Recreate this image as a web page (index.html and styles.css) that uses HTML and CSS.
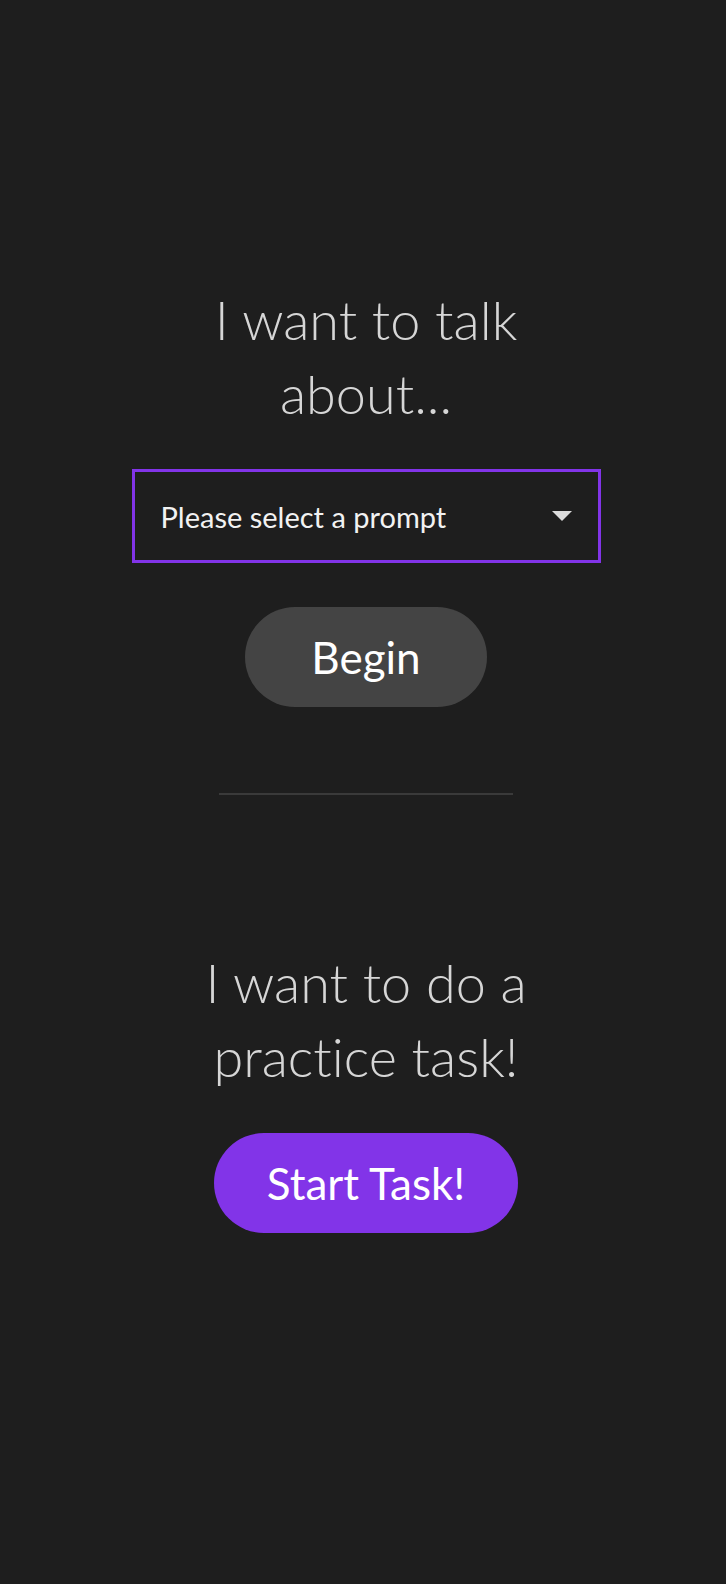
FILE: index.html
```html
<!DOCTYPE html>
<html lang="en">
<head>
<meta charset="utf-8">
<title>Practice</title>
<link rel="stylesheet" href="styles.css">
</head>
<body>
<main class="page">
  <section class="block block-talk">
    <h1 class="title">I want to talk about...</h1>
    <div class="select">
      <span class="select-label">Please select a prompt</span>
      <span class="select-arrow"></span>
    </div>
    <button class="btn btn-grey">Begin</button>
  </section>
  <hr class="divider">
  <section class="block block-task">
    <h1 class="title">I want to do a practice task!</h1>
    <button class="btn btn-purple">Start Task!</button>
  </section>
</main>
</body>
</html>
```
FILE: styles.css
```css
html, body {
  margin: 0;
  padding: 0;
  background: #1e1e1e;
}
body {
  font-family: "Lato", "Noto Sans", sans-serif;
  color: #d6d6d6;
  font-variant-ligatures: none;
}
.page {
  display: flex;
  flex-direction: column;
  align-items: center;
  padding-top: 283px;
  padding-left: 6px;
}
.block {
  display: flex;
  flex-direction: column;
  align-items: center;
}
.title {
  margin: 0;
  max-width: 390px;
  text-align: center;
  font-size: 54px;
  line-height: 74px;
  font-weight: 300;
  color: #d6d6d6;
}
.select {
  box-sizing: border-box;
  margin-top: 38px;
  width: 469px;
  height: 94px;
  border: 3px solid #8234e8;
  display: flex;
  align-items: center;
  justify-content: space-between;
  padding: 0 26px 0 26px;
}
.select-label {
  font-size: 29px;
  font-weight: 400;
  color: #f2f2f2;
}
.select-arrow {
  width: 0;
  height: 0;
  border-left: 10px solid transparent;
  border-right: 10px solid transparent;
  border-top: 10px solid #dcdcdc;
}
.btn {
  border: none;
  height: 100px;
  border-radius: 50px;
  font-family: inherit;
  font-size: 44px;
  font-weight: 400;
  color: #ffffff;
  padding: 0;
}
.btn-grey {
  margin-top: 44px;
  width: 242px;
  background: #444444;
}
.btn-purple {
  margin-top: 39px;
  width: 304px;
  background: #8234e8;
}
.divider {
  margin: 86px 0 0 0;
  width: 294px;
  height: 2px;
  border: none;
  background: #3a3a3a;
}
.block-task {
  margin-top: 151px;
}
```
